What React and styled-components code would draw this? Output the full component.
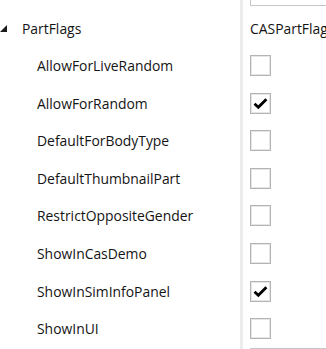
import React from 'react';
import styled, { createGlobalStyle } from 'styled-components';

const GlobalStyle = createGlobalStyle`
  html, body {
    margin: 0;
    padding: 0;
    background: #ffffff;
    overflow: hidden;
  }
`

const Page = styled.div`
  width: 326px;
  height: 349px;
  overflow: hidden;
  font-family: "Open Sans", "Noto Sans", sans-serif;
  font-size: 13.9px;
  color: #141414;
`
const Grid = styled.div`
  display: grid;
  grid-template-columns: 240px 3px 1fr;
  grid-auto-rows: 37.6px;
  margin-top: -28.4px;
`
const NameCell = styled.div`
  display: flex;
  align-items: center;
  padding-left: ${p => p.indent}px;
  white-space: nowrap;
  overflow: hidden;
`
const Divider = styled.div`
  background: #ececec;
`
const ValueCell = styled.div`
  display: flex;
  align-items: ${p => p.align || 'center'};
  padding-left: 7px;
  white-space: nowrap;
  overflow: hidden;
`
const Input = styled.div`
  width: 100%;
  height: 32px;
  box-sizing: border-box;
  margin: ${p => p.edge === 'top' ? '0 0 3px' : '0.5px 0 0'};
  border: 1px solid #c6c6c6;
  border-right: none;
  background: #fff;
`
const Expander = styled.svg`
  width: 7px;
  height: 7px;
  margin-right: 15px;
  flex-shrink: 0;
`
const Box = styled.div`
  width: 21px;
  height: 21px;
  box-sizing: border-box;
  border: 1px solid #b4b4b4;
  box-shadow: inset 0 0 0 1px #e6e6e6;
  background: #fff;
  display: flex;
  align-items: center;
  justify-content: center;
`

function Check () {
  return (
    <svg width="15" height="13" viewBox="0 0 15 13">
      <path d="M1.5 6.8 L5.3 10.3 L13.4 2.2" fill="none" stroke="#000" strokeWidth="2.8" strokeLinejoin="miter" />
    </svg>
  )
}

const flags = [
  ['AllowForLiveRandom', false],
  ['AllowForRandom', true],
  ['DefaultForBodyType', false],
  ['DefaultThumbnailPart', false],
  ['RestrictOppositeGender', false],
  ['ShowInCasDemo', false],
  ['ShowInSimInfoPanel', true],
  ['ShowInUI', false]
]

export default function App () {
  return (
    <Page>
      <GlobalStyle />
      <Grid>
        <NameCell indent={22}></NameCell>
        <Divider />
        <ValueCell align="flex-end"><Input edge="top" /></ValueCell>

        <NameCell indent={0}>
          <Expander viewBox="0 0 7 7"><polygon points="7,0 7,7 0,7" fill="#1a1a1a" /></Expander>
          PartFlags
        </NameCell>
        <Divider />
        <ValueCell>CASPartFlags</ValueCell>

        {flags.map(([name, on]) => (
          <React.Fragment key={name}>
            <NameCell indent={37}>{name}</NameCell>
            <Divider />
            <ValueCell><Box>{on && <Check />}</Box></ValueCell>
          </React.Fragment>
        ))}

        <NameCell indent={37}></NameCell>
        <Divider />
        <ValueCell align="flex-start"><Input edge="bottom" /></ValueCell>
      </Grid>
    </Page>
  )
}
